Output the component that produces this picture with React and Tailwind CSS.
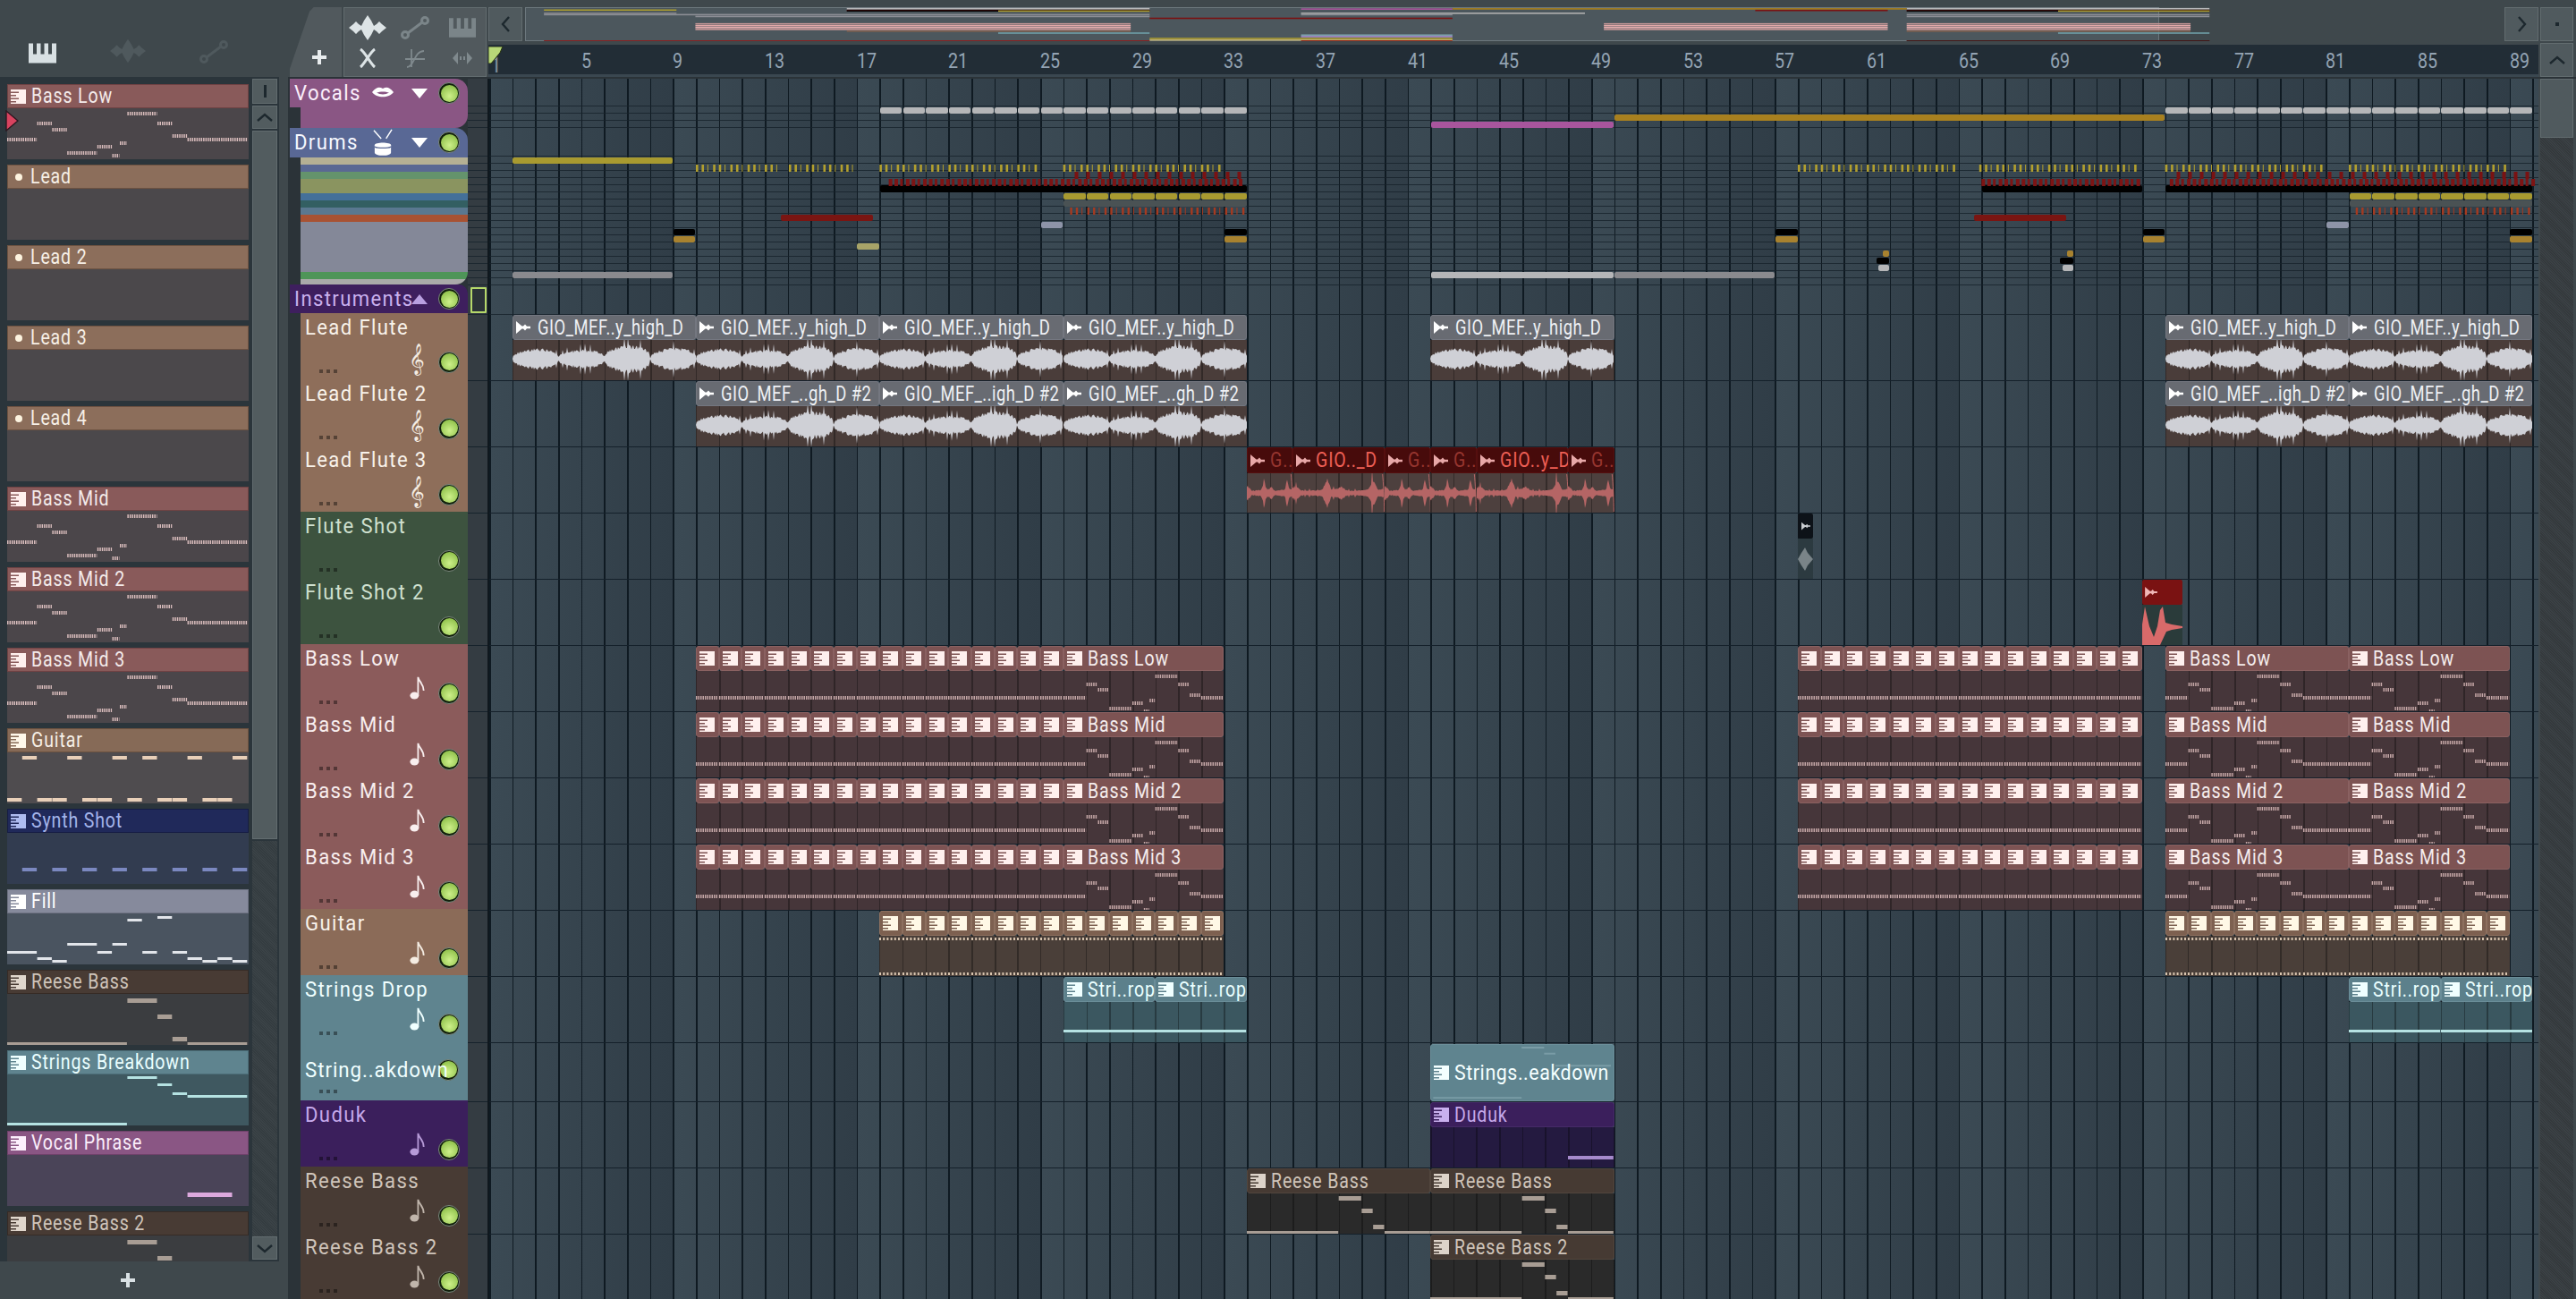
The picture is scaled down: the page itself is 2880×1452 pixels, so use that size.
import React from "react";

const BAR = 25.667;
const STEP = BAR / 4;
const barX = (n) => (n - 1) * BAR;

const lines =
  "bg-[repeating-linear-gradient(90deg,rgba(0,0,0,.32)_0,rgba(0,0,0,.32)_1.5px,transparent_1.5px,transparent_25.667px)]";

// melodies, [step from, step to, y]
const BASS = [[0,4,33],[4,6,15],[6,8,22],[8,12,48],[12,14,41],[14,15,51],[15,16,37],[16,20,4],[20,22,15],[22,24,29],[24,32,33]];
const GUITAR = [[2,4,4],[8,10,4],[14,16,4],[18,20,4],[24,26,4],[30,32,4],[0,2,51],[4,6,51],[6,8,51],[10,12,51],[12,14,51],[16,18,51],[20,22,51],[22,24,51],[26,28,51],[28,30,51]];
const SYNTH = [2,6,10,14,18,22,26,30].map((s) => [s, s + 2, 39]);
const FILL = [[0,4,42],[4,6,49],[6,8,52],[8,12,33],[12,14,42],[14,16,33],[16,18,6],[18,20,42],[20,22,3],[22,24,42],[24,26,49],[26,28,52],[28,30,49],[30,32,52]];
const REESE = [[0,16,54],[16,20,5],[20,22,23],[22,24,48],[24,32,54]];
const BREAK = [[0,16,54],[16,20,2],[20,22,10],[22,24,20],[24,32,23]];

function Notes({ notes, step, color, h = 4, dash, height = 57 }) {
  return (
    <svg width="100%" height={height} className="block overflow-hidden">
      {notes.map(([a, b, y], i) => (
        <line
          key={i}
          x1={a * step}
          x2={b * step - 0.5}
          y1={y + h / 2}
          y2={y + h / 2}
          stroke={color}
          strokeWidth={h}
          strokeDasharray={dash}
        />
      ))}
    </svg>
  );
}

// names in the app are tall and narrow, none of the installed fonts is
function Label({ className = "", children }) {
  return (
    <span className={`inline-block whitespace-nowrap origin-left scale-x-[.85] leading-none ${className}`}>{children}</span>
  );
}

function TrackLabel({ className = "", children }) {
  return (
    <span className={`inline-block whitespace-nowrap origin-left scale-x-[.92] text-[24px] tracking-[1.5px] ${className}`}>{children}</span>
  );
}

function ClipIcon({ fg, notch, className = "" }) {
  return (
    <svg viewBox="0 0 17 16" className={`shrink-0 w-[17px] h-[16px] ${className}`}>
      <rect width="17" height="16" fill={fg} />
      <rect y="2.5" width="9" height="1.5" fill={notch} />
      <rect y="6" width="6" height="1.5" fill={notch} />
      <rect y="9.5" width="9" height="1.5" fill={notch} />
      <rect y="13" width="6" height="1.5" fill={notch} />
    </svg>
  );
}

function AudioIcon({ color }) {
  return (
    <svg viewBox="0 0 16 14" className="shrink-0 w-[16px] h-[14px]">
      <path d="M0 0L6.5 5.5H8L10 3.5L12 5.8H16V8.2H12L10 10.5L8 8.5H6.5L0 14Z" fill={color} />
    </svg>
  );
}

function PianoIcon({ color, className }) {
  return (
    <svg viewBox="0 0 31 22" className={className}>
      <path fillRule="evenodd" fill={color} d="M0 0H31V22H0ZM5 0V12H9V0ZM13.5 0V12H17.5V0ZM22 0V12H26V0Z" />
    </svg>
  );
}

function WaveIcon({ color, className }) {
  return (
    <svg viewBox="0 0 42 28" className={className}>
      <path
        fill={color}
        d="M0 14L5 10L8 7L11 10L14 12L17 6L21 0L25 6L28 12L31 10L34 7L37 10L42 14L37 18L34 21L31 18L28 16L25 22L21 28L17 22L14 16L11 18L8 21L5 18Z"
      />
    </svg>
  );
}

function AutoIcon({ color, className }) {
  return (
    <svg viewBox="0 0 32 26" className={className} fill="none" stroke={color} strokeWidth="3">
      <circle cx="5" cy="21" r="3.5" />
      <circle cx="27" cy="5" r="3.5" />
      <path d="M8 19L24 7" />
    </svg>
  );
}

function Chevron({ dir }) {
  const d = { left: "M10 2L3 10L10 18", right: "M3 2L10 10L3 18", up: "M2 10L10 3L18 10", down: "M2 3L10 10L18 3" }[dir];
  const box = dir === "left" || dir === "right" ? "w-[13px] h-[20px]" : "w-[20px] h-[13px]";
  return (
    <svg viewBox={dir === "left" || dir === "right" ? "0 0 13 20" : "0 0 20 13"} className={box} fill="none" stroke="#1d282e" strokeWidth="2.4">
      <path d={d} />
    </svg>
  );
}

function Led() {
  return (
    <div className="shrink-0 w-[24px] h-[24px] rounded-full bg-[#12200c] border border-[#7d8a80] flex items-center justify-center">
      <div className="w-[19px] h-[19px] rounded-full bg-[radial-gradient(circle_at_50%_65%,#cdf08a,#7fb43a)]" />
    </div>
  );
}

const bassPick = { hdr: "bg-[#895a5a] border-[#6f4243]", text: "text-[#f3eaea]", body: "bg-[#4b464a]", fg: "#fff0ee", notch: "#895a5a", notes: BASS, note: "#d9bcbc", dash: "1.5 1" };
const leadPick = { dot: true, hdr: "bg-[#8c6e5b] border-[#6e5241]", text: "text-[#f6efe6]", body: "bg-[#4b484b]" };

const picks = [
  { name: "Bass Low", ...bassPick },
  { name: "Lead", ...leadPick },
  { name: "Lead 2", ...leadPick },
  { name: "Lead 3", ...leadPick },
  { name: "Lead 4", ...leadPick },
  { name: "Bass Mid", ...bassPick },
  { name: "Bass Mid 2", ...bassPick },
  { name: "Bass Mid 3", ...bassPick },
  { name: "Guitar", hdr: "bg-[#866a57] border-[#6d523f]", text: "text-[#f6efe6]", body: "bg-[#4f4c4f]", fg: "#fff8ea", notch: "#866a57", notes: GUITAR, note: "#e8cfb8" },
  { name: "Synth Shot", hdr: "bg-[#20295a] border-[#161d44]", text: "text-[#a3b4ea]", body: "bg-[#323c50]", fg: "#aebcf0", notch: "#20295a", notes: SYNTH, note: "#7b88c0" },
  { name: "Fill", hdr: "bg-[#868a9c] border-[#6e7282]", text: "text-white", body: "bg-[#4a5460]", fg: "#ffffff", notch: "#868a9c", notes: FILL, note: "#e2e5ea", h: 3 },
  { name: "Reese Bass", hdr: "bg-[#483b34] border-[#362b25]", text: "text-[#cfc4ba]", body: "bg-[#3b3d40]", fg: "#e0d6cc", notch: "#483b34", notes: REESE, note: "#a89d94", h: 5 },
  { name: "Strings Breakdown", hdr: "bg-[#5f848f] border-[#4c6e78]", text: "text-[#eaffff]", body: "bg-[#3f5860]", fg: "#f0ffff", notch: "#5f848f", notes: BREAK, note: "#b5e2e2", h: 3 },
  { name: "Vocal Phrase", hdr: "bg-[#8a5684] border-[#6f426a]", text: "text-[#fbeefb]", body: "bg-[#4a4458]", fg: "#fdf0fd", notch: "#8a5684", notes: [[24,30,42]], note: "#dca9dd", h: 5 },
  { name: "Reese Bass 2", hdr: "bg-[#483b34] border-[#362b25]", text: "text-[#cfc4ba]", body: "bg-[#3b3d40]", fg: "#e0d6cc", notch: "#483b34", notes: REESE, note: "#a89d94", h: 5 },
];

function PickItem({ item }) {
  return (
    <div className="shrink-0 w-[270px] h-[84px] flex flex-col">
      <div className={`h-[27px] border flex items-center pl-[3px] gap-[6px] ${item.hdr}`}>
        {item.dot ? (
          <div className="w-[8px] h-[8px] rounded-full bg-[#fdf4e0] ml-[5px] mr-[3px]" />
        ) : (
          <ClipIcon fg={item.fg} notch={item.notch} />
        )}
        <Label className={item.text}>{item.name}</Label>
      </div>
      <div className={`flex-1 overflow-hidden ${item.body}`}>
        {item.notes && <Notes notes={item.notes} step={8.4} color={item.note} dash={item.dash} h={item.h || 4} />}
      </div>
    </div>
  );
}

function LeftPanel() {
  return (
    <div className="w-[322px] h-full flex flex-col shrink-0">
      <div className="h-[86px] flex items-end pb-[15px] shrink-0">
        <PianoIcon color="#d8e0e3" className="ml-[32px] w-[31px] h-[23px]" />
        <WaveIcon color="#4f595d" className="ml-[60px] w-[40px] h-[28px]" />
        <AutoIcon color="#4f595d" className="ml-[60px] w-[32px] h-[26px]" />
      </div>
      <div className="relative h-[1324px] w-[312px] bg-[#2b353b] flex shrink-0 overflow-hidden">
        <div className="w-[282px] pl-[8px] pt-[8px] flex flex-col gap-[6px] overflow-hidden">
          {picks.map((p) => (
            <PickItem key={p.name} item={p} />
          ))}
        </div>
        <div className="w-[28px] pt-[2px] flex flex-col gap-[2px]">
          <div className="h-[28px] bg-[#525c5f] border border-[#626c6f] flex items-center justify-center">
            <div className="w-[3px] h-[14px] bg-[#1d282e]" />
          </div>
          <div className="h-[26px] bg-[#525c5f] border border-[#626c6f] flex items-center justify-center">
            <Chevron dir="up" />
          </div>
          <div className="h-[792px] bg-[#525c5f] border border-[#626c6f]" />
          <div className="flex-1 -mb-[2px] bg-[repeating-linear-gradient(45deg,#3b4347_0,#3b4347_1px,#343c40_1px,#343c40_2px)]" />
          <div className="h-[26px] mb-[2px] bg-[#525c5f] border border-[#626c6f] flex items-center justify-center">
            <Chevron dir="down" />
          </div>
        </div>
        <svg viewBox="0 0 15 24" className="absolute left-[6px] top-[37px] w-[15px] h-[24px]">
          <path d="M1 1L14 12L1 23Z" fill="#d8435f" stroke="#2b1820" strokeWidth="1.4" />
        </svg>
      </div>
      <div className="flex-1 w-[286px] flex items-center justify-center">
        <svg viewBox="0 0 16 16" className="w-[16px] h-[16px]" fill="#d8e0e3">
          <path d="M6 0h4v6h6v4h-6v6H6v-6H0V6h6z" />
        </svg>
      </div>
    </div>
  );
}

function NoteIcon({ color }) {
  return (
    <svg viewBox="0 0 20 30" className="w-[19px] h-[27px] mb-[5px]" fill="none">
      <ellipse cx="6.5" cy="25" rx="5.5" ry="4.5" fill={color} />
      <path d="M11 25V2C12 8 18 10 18 19" stroke={color} strokeWidth="2" />
    </svg>
  );
}

const tracks = [
  { name: "Lead Flute", h: "h-[74px]", bg: "bg-[#8e6e5a]", text: "text-[#f8f2ea]", icon: "#f4ece2", clef: true },
  { name: "Lead Flute 2", h: "h-[74px]", bg: "bg-[#8e6e5a]", text: "text-[#f8f2ea]", icon: "#f4ece2", clef: true },
  { name: "Lead Flute 3", h: "h-[74px]", bg: "bg-[#8e6e5a]", text: "text-[#f8f2ea]", icon: "#f4ece2", clef: true },
  { name: "Flute Shot", h: "h-[74px]", bg: "bg-[#3d533f]", text: "text-[#cfe0cf]" },
  { name: "Flute Shot 2", h: "h-[74px]", bg: "bg-[#3d533f]", text: "text-[#cfe0cf]" },
  { name: "Bass Low", h: "h-[74px]", bg: "bg-[#8b5b5b]", text: "text-[#f8eeee]", icon: "#f8eeee" },
  { name: "Bass Mid", h: "h-[74px]", bg: "bg-[#8b5b5b]", text: "text-[#f8eeee]", icon: "#f8eeee" },
  { name: "Bass Mid 2", h: "h-[74px]", bg: "bg-[#8b5b5b]", text: "text-[#f8eeee]", icon: "#f8eeee" },
  { name: "Bass Mid 3", h: "h-[74px]", bg: "bg-[#8b5b5b]", text: "text-[#f8eeee]", icon: "#f8eeee" },
  { name: "Guitar", h: "h-[74px]", bg: "bg-[#8b6b58]", text: "text-[#f8f2ea]", icon: "#f4ece2" },
  { name: "Strings Drop", h: "h-[74px]", bg: "bg-[#5f848f]", text: "text-[#f0ffff]", icon: "#f0ffff" },
  { name: "String..akdown", h: "h-[66px]", bg: "bg-[#5f848f]", text: "text-[#f0ffff]", inline: true },
  { name: "Duduk", h: "h-[74px]", bg: "bg-[#3b1f5c]", text: "text-[#c5a9ea]", icon: "#b79bd8" },
  { name: "Reese Bass", h: "h-[74px]", bg: "bg-[#483b34]", text: "text-[#cfc4ba]", icon: "#c0b5ab" },
  { name: "Reese Bass 2", h: "h-[74px]", bg: "bg-[#483b34]", text: "text-[#cfc4ba]", icon: "#c0b5ab" },
];

function Dots() {
  return (
    <div className="flex gap-[4px]">
      <div className="w-[4px] h-[4px] bg-black/40" />
      <div className="w-[4px] h-[4px] bg-black/40" />
      <div className="w-[4px] h-[4px] bg-black/40" />
    </div>
  );
}

function TrackHead({ t }) {
  if (t.inline) {
    return (
      <div className={`${t.h} ${t.bg} pl-[5px] pr-[10px] flex flex-col`}>
        <div className="flex items-center pt-[20px]">
          <span className={`w-0 flex-1 whitespace-nowrap origin-left scale-x-[.93] text-[24px] leading-none ${t.text}`}>{t.name}</span>
          <Led />
        </div>
        <div className="ml-[16px] mt-[10px]">
          <Dots />
        </div>
      </div>
    );
  }
  return (
    <div className={`${t.h} ${t.bg} pl-[5px] pr-[9px] flex flex-col`}>
      <TrackLabel className={`mt-[4px] leading-[25px] ${t.text}`}>{t.name}</TrackLabel>
      <div className="flex-1 flex items-end justify-between pl-[16px] pb-[7px]">
        <Dots />
        <div className="flex items-end gap-[14px]">
          {t.clef && <span className="text-[30px] leading-[32px] [font-family:'DejaVu_Sans',sans-serif]" style={{ color: t.icon }}>{"\u{1D11E}"}</span>}
          {t.icon && !t.clef && <NoteIcon color={t.icon} />}
          <Led />
        </div>
      </div>
    </div>
  );
}

const drumLanes = [
  "h-[8px] bg-[#b5b094]", "h-[8px] bg-[#5a6893]", "h-[8px] bg-[#64936c]", "h-[16px] bg-[#8a9460]",
  "h-[8px] bg-[#447099]", "h-[8px] bg-[#335f62]", "h-[8px] bg-[#5a7890]", "h-[8px] bg-[#a85233]",
  "h-[56px] bg-[#848898]", "h-[8px] bg-[#4e9558]",
];

function TrackColumn() {
  return (
    <div className="w-[201px] shrink-0 pl-[2px] flex flex-col bg-[#2b3338]">
      <div className="h-[55px] flex flex-col">
        <div className="h-[32px] bg-[#8a5684] rounded-tr-[14px] flex items-center pl-[5px] pr-[9px]">
          <TrackLabel className="text-[#fbeefb] leading-none">Vocals</TrackLabel>
          <svg viewBox="0 0 24 14" className="ml-auto w-[24px] h-[14px]">
            <path fillRule="evenodd" fill="#fff" d="M0 6C5 0 8 0 12 2C16 0 19 0 24 6C19 13 5 13 0 6ZM5 6.5C9 9 15 9 19 6.5C15 5 9 5 5 6.5Z" />
          </svg>
          <svg viewBox="0 0 18 11" className="ml-[20px] mr-[12px] w-[18px] h-[11px]"><path d="M0 0H18L9 11Z" fill="#fff" /></svg>
          <Led />
        </div>
        <div className="flex-1 ml-[12px] bg-[#8a5684] rounded-br-[14px]" />
      </div>
      <div className="h-[177px] flex flex-col">
        <div className="h-[33px] bg-[#596895] rounded-tr-[14px] flex items-center pl-[5px] pr-[9px]">
          <TrackLabel className="text-[#f6f8ff] leading-none">Drums</TrackLabel>
          <svg viewBox="0 0 24 34" className="ml-auto w-[24px] h-[31px]" fill="none">
            <path d="M1 2L10 12M23 1L16 12" stroke="#fff" strokeWidth="1.6" />
            <path fill="#fff" d="M2 20C2 16 22 16 22 20V29C22 34 2 34 2 29Z" />
            <path stroke="#596895" strokeWidth="1.4" d="M2 22C6 24 18 24 22 22" />
          </svg>
          <svg viewBox="0 0 18 11" className="ml-[20px] mr-[12px] w-[18px] h-[11px]"><path d="M0 0H18L9 11Z" fill="#fff" /></svg>
          <Led />
        </div>
        <div className="flex-1 ml-[12px] flex flex-col rounded-br-[14px] overflow-hidden">
          {drumLanes.map((c, i) => (
            <div key={i} className={c} />
          ))}
          <div className="flex-1 bg-[#aaaaaa]" />
        </div>
      </div>
      <div className="h-[32px] bg-[#3e1f5e] rounded-tr-[10px] flex items-center pl-[5px] pr-[9px]">
        <TrackLabel className="text-[#c9b0ee] leading-none w-0">Instruments</TrackLabel>
        <svg viewBox="0 0 18 11" className="ml-auto mr-[12px] w-[18px] h-[11px]"><path d="M0 11H18L9 0Z" fill="#b9a0e0" /></svg>
        <Led />
      </div>
      <div className="ml-[12px] flex flex-col">
        {tracks.map((t) => (
          <TrackHead key={t.name} t={t} />
        ))}
      </div>
    </div>
  );
}

// lane stripes above the instrument rows
const laneHeights = [
  "h-[31px]", "h-[8px]", "h-[8px]", "h-[8px]", "h-[32px]",
  ...Array(18).fill("h-[8px]"),
  "h-[33px]",
];

const strip = (a, b, y, c, h = 7) => ({ a, b, y, c, h });
const perBar = (from, to, y, c) => {
  const out = [];
  for (let i = from; i < to; i++) out.push(strip(i, i + 1, y, c));
  return out;
};

const SILVER = "bg-[#b5b6b8]";
const YELLOW = "bg-[#a89a30]";
const ORANGE = "bg-[#a8822f]";
const laneStrips = [
  ...perBar(18, 34, 120, SILVER),
  ...perBar(74, 90, 120, SILVER),
  strip(50, 74, 128, "bg-[#a8801f]"),
  strip(42, 50, 136, "bg-[#a8559d]"),
  strip(2, 9, 176, YELLOW),
  strip(13.7, 17.75, 240, "bg-[#7a1512]", 7),
  strip(65.65, 69.7, 240, "bg-[#7a1512]", 7),
  strip(17, 18, 272, "bg-[#a8a468]"),
  strip(25, 26, 248, "bg-[#8e94a8]"),
  strip(81, 82, 248, "bg-[#8e94a8]"),
  ...perBar(26, 34, 216, YELLOW),
  ...perBar(82, 90, 216, YELLOW),
  strip(26, 34, 224, "bg-[#4a5254]"),
  strip(82, 90, 224, "bg-[#4a5254]"),
  strip(9, 10, 256, "bg-black"), strip(9, 10, 264, ORANGE),
  strip(33, 34, 256, "bg-black"), strip(33, 34, 264, ORANGE),
  strip(57, 58, 256, "bg-black"), strip(57, 58, 264, ORANGE),
  strip(73, 74, 256, "bg-black"), strip(73, 74, 264, ORANGE),
  strip(89, 90, 256, "bg-black"), strip(89, 90, 264, ORANGE),
  strip(61.7, 62, 280, ORANGE), strip(61.4, 62, 288, "bg-black"), strip(61.5, 62, 296, SILVER),
  strip(69.7, 70, 280, ORANGE), strip(69.4, 70, 288, "bg-black"), strip(69.5, 70, 296, SILVER),
  strip(2, 9, 304, "bg-[#8a8a8e]"),
  strip(42, 50, 304, SILVER),
  strip(50, 57, 304, "bg-[#8a8a8e]"),
  strip(18, 34, 207, "bg-black", 8),
  strip(66, 73, 207, "bg-black", 8),
  strip(74, 90, 207, "bg-black", 8),
];

function ticks(from, to, y, h, step, color, wide, thin) {
  const out = [];
  let i = 0;
  for (let x = barX(from); x < barX(to); x += step) {
    const w = (i * 7) % 3 === 2 ? thin : wide;
    out.push(<rect key={`${y}-${from}-${i}`} x={x} y={y - 88} width={w} height={h} fill={color} />);
    i++;
  }
  return out;
}

function LaneTicks() {
  return (
    <svg className="absolute left-0 top-0 w-full h-[264px]">
      {[[10, 13.6], [14.05, 17], [18, 24.8], [26, 32.8], [58, 64.9], [65.9, 72.8], [74, 80.8], [82, 88.8]].map(([a, b]) =>
        ticks(a, b, 184, 8, 6.417, "#b3a02e", 2.6, 1)
      )}
      {[[26.5, 33.9], [74.5, 90]].map(([a, b]) => ticks(a, b, 192, 8, 13, "#7a1212", 4, 4))}
      {[[18.4, 33.9], [66, 73], [74.2, 90]].map(([a, b]) => ticks(a, b, 200, 8, 6.417, "#7d1414", 4, 3))}
      {[[26.3, 33.9], [82.3, 90]].map(([a, b]) => ticks(a, b, 232, 8, 6.417, "#a63a20", 2.4, 1))}
    </svg>
  );
}

function noise(x, seed) {
  const v = Math.sin(x * 12.9898 + seed) * 43758.5453;
  return v - Math.floor(v);
}

function flute(t) {
  const pos = t * 4;
  const idx = Math.floor(pos) % 4;
  const s = pos - Math.floor(pos);
  const amps = [12, 11, 16, 13];
  return amps[idx] * Math.pow(Math.sin(Math.PI * s), 0.35) * (0.85 + 0.2 * s);
}

function redShape(t) {
  const s = (t * 2) % 1;
  return 2 + 6 * Math.exp(-Math.pow((s - 0.05) * 10, 2)) + 3 * s + 13 * Math.exp(-Math.pow((s - 0.75) * 16, 2));
}

function wavePath(w, cy, amp, seed, spikes) {
  const top = [];
  const bot = [];
  for (let x = 0; x <= w; x += 1) {
    const n = noise(x, seed);
    let a = amp(x / w) * (0.72 + 0.38 * n);
    if (spikes && n > 0.94) a *= 1.55;
    top.push(`${x} ${(cy - a * 0.95).toFixed(1)}`);
    bot.unshift(`${x} ${(cy + a).toFixed(1)}`);
  }
  return `M${top.join("L")}L${bot.join("L")}Z`;
}

const flutePath8 = wavePath(205.33, 21, flute, 3, true);
const redPath2 = wavePath(51.33, 22, redShape, 5, false);
const redPath4 = wavePath(102.67, 22, redShape, 9, true);

function AudioClip({ from, to, title }) {
  return (
    <div className="absolute top-0 h-[73px] flex flex-col" style={{ left: barX(from), width: (to - from) * BAR }}>
      <div className="h-[28px] shrink-0 rounded-[3px] bg-[#686b72] border border-[#747780] flex items-center pl-[3px] gap-[8px]">
        <AudioIcon color="#ffffff" />
        <span className="inline-block origin-left scale-x-[.8] text-[#eef0f4] leading-none whitespace-nowrap tracking-[0.6px]">{title}</span>
      </div>
      <div className={`flex-1 bg-[#4a3d3a] ${lines}`}>
        <svg className="w-full h-[45px] block" viewBox="0 0 205.33 45">
          <path d={flutePath8} fill="#cfd0d6" />
        </svg>
      </div>
    </div>
  );
}

function RedClip({ from, to, title, dim }) {
  const w = (to - from) * BAR;
  return (
    <div className="absolute top-0 h-[73px] flex flex-col" style={{ left: barX(from), width: w }}>
      <div className="h-[29px] shrink-0 rounded-[2px] bg-[#470b0b] border border-[#550f0f] flex items-center pl-[3px] gap-[6px]">
        <AudioIcon color="#e8a8a8" />
        <Label className={dim ? "text-[#96352f]" : "text-[#ef5f55]"}>{title}</Label>
      </div>
      <div className={`flex-1 bg-[#4d403e] ${lines}`}>
        <svg className="w-full h-[44px] block" viewBox={`0 0 ${w} 44`}>
          <path d={w > 60 ? redPath4 : redPath2} fill="#b56565" />
          <path d={`M${w - 2} 1C${w - 1} 10 ${w} 30 ${w} 43`} stroke="#b56565" fill="none" />
        </svg>
      </div>
    </div>
  );
}

const themes = {
  bass: { hdr: "bg-[#7d5353] border-[#8a6161]", body: "bg-[#46363a]", text: "text-[#f4ecec]", fg: "#fff0ee", notch: "#7d5353", note: "#c4a6a6" },
  guitar: { hdr: "bg-[#7d6050] border-[#8d705f]", body: "bg-[#4a3f39]", text: "text-[#fff8ea]", fg: "#fff8e6", notch: "#7d6050", note: "#d8c4ae" },
  strings: { hdr: "bg-[#5c808b] border-[#6b8e99]", body: "bg-[#3b5760]", text: "text-[#eaffff]", fg: "#f0ffff", notch: "#5c808b", note: "#b5e2e2" },
  duduk: { hdr: "bg-[#3b1f5c] border-[#452a68]", body: "bg-[#241a40]", text: "text-[#c5a9ea]", fg: "#c9b0ee", notch: "#3b1f5c", note: "#a68acc" },
  reese: { hdr: "bg-[#463a33] border-[#52453d]", body: "bg-[#2a2a2a]", text: "text-[#cfc4ba]", fg: "#ddd3c9", notch: "#463a33", note: "#a89d94" },
};

const BASS_CLIP = [[0,4,28],[4,6,13],[6,8,19],[8,12,40],[12,14,34],[14,15,43],[15,16,31],[16,20,4],[20,22,13],[22,24,25],[24,32,28]];
const BASS_CUT = BASS_CLIP.map((n) => [n[0], Math.min(n[1], 28), n[2]]);
const REESE_CLIP = [[0,16,42],[16,20,3],[20,22,17],[22,24,35],[24,32,42]];

function MidiClip({ from, to, title, theme, notes, dash, h = 4 }) {
  const t = themes[theme];
  return (
    <div className="absolute top-0 h-[73px] flex flex-col" style={{ left: barX(from), width: (to - from) * BAR }}>
      <div className={`h-[28px] shrink-0 rounded-[3px] border flex items-center pl-[3px] gap-[6px] ${t.hdr}`}>
        <ClipIcon fg={t.fg} notch={t.notch} />
        {title && <Label className={t.text}>{title}</Label>}
      </div>
      <div className={`flex-1 overflow-hidden ${t.body} ${lines}`}>
        {notes && <Notes notes={notes} step={STEP} color={t.note} dash={dash} h={h} height={45} />}
      </div>
    </div>
  );
}

function bassRow(title) {
  const out = [];
  const run = (a, b) => {
    for (let i = a; i < b; i++)
      out.push(<MidiClip key={i} from={i} to={i + 1} theme="bass" notes={[[0, 4, 28]]} dash="1.5 1" />);
  };
  run(10, 26);
  run(58, 73);
  out.push(<MidiClip key="a" from={26} to={33} title={title} theme="bass" notes={BASS_CUT} dash="1.5 1" />);
  out.push(<MidiClip key="b" from={74} to={82} title={title} theme="bass" notes={BASS_CLIP} dash="1.5 1" />);
  out.push(<MidiClip key="c" from={82} to={89} title={title} theme="bass" notes={BASS_CUT} dash="1.5 1" />);
  return out;
}

function guitarRow() {
  const out = [];
  const run = (a, b) => {
    for (let i = a; i < b; i++)
      out.push(<MidiClip key={i} from={i} to={i + 1} theme="guitar" notes={[[0, 4, 2], [0, 4, 41]]} dash="2 2.2" h={3} />);
  };
  run(18, 33);
  run(74, 89);
  return out;
}

const rowClips = [
  [[2, 10], [10, 18], [18, 26], [26, 34], [42, 50], [74, 82], [82, 90]].map(([a, b]) => (
    <AudioClip key={a} from={a} to={b} title="GIO_MEF..y_high_D" />
  )),
  [[10, 18, "GIO_MEF_..gh_D #2"], [18, 26, "GIO_MEF_..igh_D #2"], [26, 34, "GIO_MEF_..gh_D #2"], [74, 82, "GIO_MEF_..igh_D #2"], [82, 90, "GIO_MEF_..gh_D #2"]].map(([a, b, t]) => (
    <AudioClip key={a} from={a} to={b} title={t} />
  )),
  [[34, 36, "G.."], [36, 40, "GIO.._D"], [40, 42, "G.."], [42, 44, "G.."], [44, 48, "GIO..y_D"], [48, 50, "G.."]].map(([a, b, t]) => (
    <RedClip key={a} from={a} to={b} title={t} dim={b - a === 2} />
  )),
  <div key="s1" className="absolute top-0 h-[73px] flex flex-col" style={{ left: barX(58), width: 17 }}>
    <div className="h-[28px] bg-[#0d1218] rounded-[2px] flex items-center justify-center">
      <svg viewBox="0 0 16 14" className="w-[10px] h-[10px]"><path d="M0 0L6.5 5.5H8L10 3.5L12 5.8H16V8.2H12L10 10.5L8 8.5H6.5L0 14Z" fill="#c8ccd0" /></svg>
    </div>
    <div className="flex-1 bg-[#2c3a40] flex items-center justify-center">
      <svg viewBox="0 0 17 30" className="w-[17px] h-[30px]"><path d="M0 15L4 8L8 2L11 8L17 15L11 22L8 28L4 22Z" fill="#7a8488" /></svg>
    </div>
  </div>,
  <div key="s2" className="absolute top-0 h-[73px] flex flex-col" style={{ left: barX(73), width: 45 }}>
    <div className="h-[28px] bg-[#7a1212] rounded-[2px] flex items-center pl-[3px]">
      <svg viewBox="0 0 16 14" className="w-[14px] h-[12px]"><path d="M0 0L6.5 5.5H8L10 3.5L12 5.8H16V8.2H12L10 10.5L8 8.5H6.5L0 14Z" fill="#f0b8b8" /></svg>
    </div>
    <div className="flex-1 bg-[#2a3b3a]">
      <svg viewBox="0 0 45 45" className="w-[45px] h-[45px]"><path d="M0 45V22L3 2L8 24L13 36L17 24L20 6L23 2L26 20L33 22L45 24V26L33 28L27 30L20 45Z" fill="#d86a6a" /></svg>
    </div>
  </div>,
  bassRow("Bass Low"),
  bassRow("Bass Mid"),
  bassRow("Bass Mid 2"),
  bassRow("Bass Mid 3"),
  guitarRow(),
  [[26, 30], [30, 34], [82, 86], [86, 90]].map(([a, b]) => (
    <MidiClip key={a} from={a} to={b} title="Stri..rop" theme="strings" notes={[[0, 16, 31]]} h={3} />
  )),
  <div key="brk" className="absolute top-[1px] h-[64px] rounded-[3px] bg-[#5f848f] border border-[#6b8e99] flex items-center pl-[3px] gap-[6px]" style={{ left: barX(42), width: 8 * BAR }}>
    <svg viewBox="0 0 205 64" className="absolute left-0 top-0 w-full h-full">
      <path d="M102 2H128V4H102ZM128 9H141V11H128ZM141 23H205V25H141ZM0 60H102V62H0Z" fill="#7a9ca6" />
    </svg>
    <ClipIcon fg="#f4ffff" notch="#5f848f" className="relative" />
    <span className="relative inline-block origin-left scale-x-[.93] text-[#f4ffff] leading-none whitespace-nowrap tracking-[0.6px]">Strings..eakdown</span>
  </div>,
  <MidiClip key="dud" from={42} to={50} title="Duduk" theme="duduk" notes={[[24, 32, 32]]} />,
  [[34, 42], [42, 50]].map(([a, b]) => (
    <MidiClip key={a} from={a} to={b} title="Reese Bass" theme="reese" notes={REESE_CLIP} h={5} />
  )),
  <MidiClip key="r2" from={42} to={50} title="Reese Bass 2" theme="reese" notes={REESE_CLIP} h={5} />,
];

function Lanes() {
  return (
    <div className="h-[264px] flex flex-col">
      {laneHeights.map((h, i) => (
        <div key={i} className={`${h} border-b border-[#16222b]/80`} />
      ))}
    </div>
  );
}

function Playlist() {
  return (
    <div className="flex flex-1 min-w-0">
      <div className="w-[24px] shrink-0 bg-[#343c42] border-r-2 border-[#10181e]">
        <div className="relative">
          <Lanes />
          <div className="absolute left-[3px] top-[233px] w-[18px] h-[29px] border-2 border-[#b5d86a] bg-[#2b3338] rounded-[1px]" />
        </div>
        {tracks.map((t) => (
          <div key={t.name} className={`${t.h} border-b border-[#16222b]`} />
        ))}
      </div>
      <div className="relative flex-1 min-w-0 overflow-hidden bg-[#34424c] bg-[repeating-linear-gradient(90deg,#0f1a22_0,#0f1a22_1.5px,transparent_1.5px,transparent_25.667px),repeating-linear-gradient(90deg,#3b4a54_0,#303d47_205.33px)]">
        <div className="relative">
          <Lanes />
          {laneStrips.map((s, i) => (
            <div
              key={i}
              className={`absolute rounded-[2px] ${s.c}`}
              style={{ left: barX(s.a) + 0.5, top: s.y - 88, width: (s.b - s.a) * BAR - 1, height: s.h }}
            />
          ))}
          <LaneTicks />
        </div>
        {tracks.map((t, i) => (
          <div key={t.name} className={`relative ${t.h} border-b border-[#14202a]`}>
            {rowClips[i]}
          </div>
        ))}
      </div>
    </div>
  );
}

function Overview() {
  const mx = (n) => (n - 1) * 21.16;
  const my = (y) => ((y - 88) * 38) / 1364;
  const lanes = [
    [18, 34, 120, "#b5b6b8"], [74, 90, 120, "#b5b6b8"], [50, 74, 128, "#a8801f"], [42, 50, 136, "#a8559d"],
    [2, 9, 176, "#a89a30"], [18, 34, 192, "#7a1212"], [66, 73, 192, "#7a1212"], [74, 90, 192, "#a02020"],
    [18, 34, 207, "#000"], [74, 90, 207, "#000"], [26, 34, 216, "#a89a30"], [82, 90, 216, "#a89a30"],
    [2, 9, 304, "#8a8a8e"], [42, 57, 304, "#b0b0b0"], [2, 34, 360, "#8d8f96"], [42, 50, 360, "#8d8f96"], [74, 90, 360, "#8d8f96"],
    [10, 34, 434, "#8d8f96"], [74, 90, 434, "#8d8f96"], [34, 50, 508, "#7a1212"],
    [10, 33, 730, "#c89898"], [58, 73, 730, "#c89898"], [74, 89, 730, "#c89898"], [10, 33, 804, "#e0a8a8"], [58, 73, 804, "#e0a8a8"], [74, 89, 804, "#e0a8a8"],
    [10, 33, 878, "#e8b0b0"], [58, 73, 878, "#e8b0b0"], [74, 89, 878, "#e8b0b0"], [10, 33, 952, "#c89898"], [58, 73, 952, "#c89898"], [74, 89, 952, "#c89898"],
    [18, 33, 1026, "#7d6050"], [74, 89, 1026, "#7d6050"], [26, 34, 1100, "#6f9fa8"], [82, 90, 1100, "#6f9fa8"], [42, 50, 1180, "#7aa0aa"],
    [42, 50, 1240, "#a68acc"], [34, 50, 1314, "#a89a30"], [42, 50, 1388, "#a89a30"], [34, 50, 1376, "#c0b070"],
    [2, 34, 1420, "#8a1616"], [42, 50, 1420, "#8a1616"], [74, 90, 1420, "#8a1616"], [74, 90, 1432, "#111"],
  ];
  return (
    <svg className="block w-full h-[38px]">
      <rect x="0.5" y="0.5" width="1826" height="37" fill="#4c575d" stroke="#6c777d" />
      {lanes.map(([a, b, y, c], i) => (
        <rect key={i} x={mx(a)} y={my(y)} width={mx(b) - mx(a)} height="1.6" fill={c} />
      ))}
    </svg>
  );
}

const barLabels = [];
for (let n = 5; n <= 89; n += 4) barLabels.push(n);

function Timeline() {
  return (
    <div className="relative h-[36px] mt-[4px] bg-[#222d36] border-b-[3px] border-[#3a4750]">
      <span className="absolute left-[2px] top-[12px] text-[#7f8e9b] leading-none">1</span>
      {barLabels.map((n) => (
        <span key={n} className="absolute top-[5px] origin-left scale-x-[.82] text-[#93a3b3] text-[24px] leading-[26px] tracking-normal" style={{ left: barX(n) + 1 }}>
          {n}
        </span>
      ))}
      <svg viewBox="0 0 17 19" className="absolute left-[0px] top-[2px] w-[17px] h-[19px]">
        <path d="M0 0H16L13 7L3 19H0Z" fill="#b8d878" stroke="#26310f" strokeWidth="1" />
      </svg>
    </div>
  );
}

function TopBar() {
  return (
    <div className="h-[86px] shrink-0 flex pt-[8px] pl-[2px]">
      <div className="w-[58px] h-[78px] bg-[#51595d] [clip-path:polygon(0_100%,0_88%,38%_6%,46%_0,100%_0,100%_100%)] flex items-end justify-end pr-[17px] pb-[14px]">
        <svg viewBox="0 0 16 16" className="w-[16px] h-[16px]" fill="#e8ecee">
          <path d="M6 0h4v6h6v4h-6v6H6v-6H0V6h6z" />
        </svg>
      </div>
      <div className="ml-[2px] w-[160px] h-[78px] bg-[#51595d] border border-[#626c6f] grid grid-cols-3 place-items-center pt-[3px] pb-[4px]">
        <WaveIcon color="#dde4e6" className="w-[42px] h-[28px]" />
        <AutoIcon color="#7b8589" className="w-[32px] h-[26px]" />
        <PianoIcon color="#7b8589" className="w-[30px] h-[22px]" />
        <svg viewBox="0 0 20 22" className="w-[20px] h-[22px]" fill="none" stroke="#dde4e6" strokeWidth="3">
          <path d="M2 1C7 4 13 17 18 21M18 1C13 4 7 17 2 21" />
        </svg>
        <svg viewBox="0 0 22 22" className="w-[22px] h-[22px]" fill="none" stroke="#7f898d" strokeWidth="1.8">
          <path d="M0 12H22M7 1V21M2 21C10 21 10 3 21 3" />
        </svg>
        <svg viewBox="0 0 22 14" className="w-[22px] h-[14px]" fill="#7f898d">
          <path d="M0 7L6 0V14ZM22 7L16 0V14ZM8 5H10V9H8ZM12 5H14V9H12Z" />
        </svg>
      </div>
      <div className="ml-[2px] w-[2292px] shrink-0 flex flex-col">
        <div className="flex h-[38px] gap-[3px]">
          <div className="w-[38px] shrink-0 bg-[#505a5e] border border-[#626c6f] flex items-center justify-center">
            <Chevron dir="left" />
          </div>
          <div className="flex-1 min-w-0">
            <Overview />
          </div>
          <div className="w-[38px] shrink-0 bg-[#505a5e] border border-[#626c6f] flex items-center justify-center">
            <Chevron dir="right" />
          </div>
        </div>
        <Timeline />
      </div>
      <div className="ml-[2px] w-[37px] shrink-0 flex flex-col gap-[2px]">
        <div className="h-[38px] bg-[#505a5e] border border-[#626c6f] flex items-center justify-center">
          <div className="w-[4px] h-[4px] bg-[#1d282e]" />
        </div>
        <div className="h-[38px] bg-[#505a5e] border border-[#626c6f] flex items-center justify-center">
          <Chevron dir="up" />
        </div>
      </div>
    </div>
  );
}

export default function App() {
  return (
    <div className="w-[2880px] h-[1452px] flex overflow-hidden bg-[#3f484c] text-[23px] tracking-[1px] [font-family:Roboto,sans-serif]">
      <LeftPanel />
      <div className="flex-1 min-w-0 h-full flex flex-col">
        <TopBar />
        <div className="h-[2px] shrink-0 bg-[#2b3338]" />
        <div className="flex flex-1 min-h-0 overflow-hidden">
          <TrackColumn />
          <Playlist />
          <div className="w-[42px] shrink-0 pl-[2px] pr-[3px]">
            <div className="h-[66px] bg-[#505a5e] border border-[#626c6f]" />
            <div className="h-[1298px] bg-[repeating-linear-gradient(45deg,#3b4145_0,#3b4145_1px,#34393c_1px,#34393c_2px)]" />
          </div>
        </div>
      </div>
    </div>
  );
}
